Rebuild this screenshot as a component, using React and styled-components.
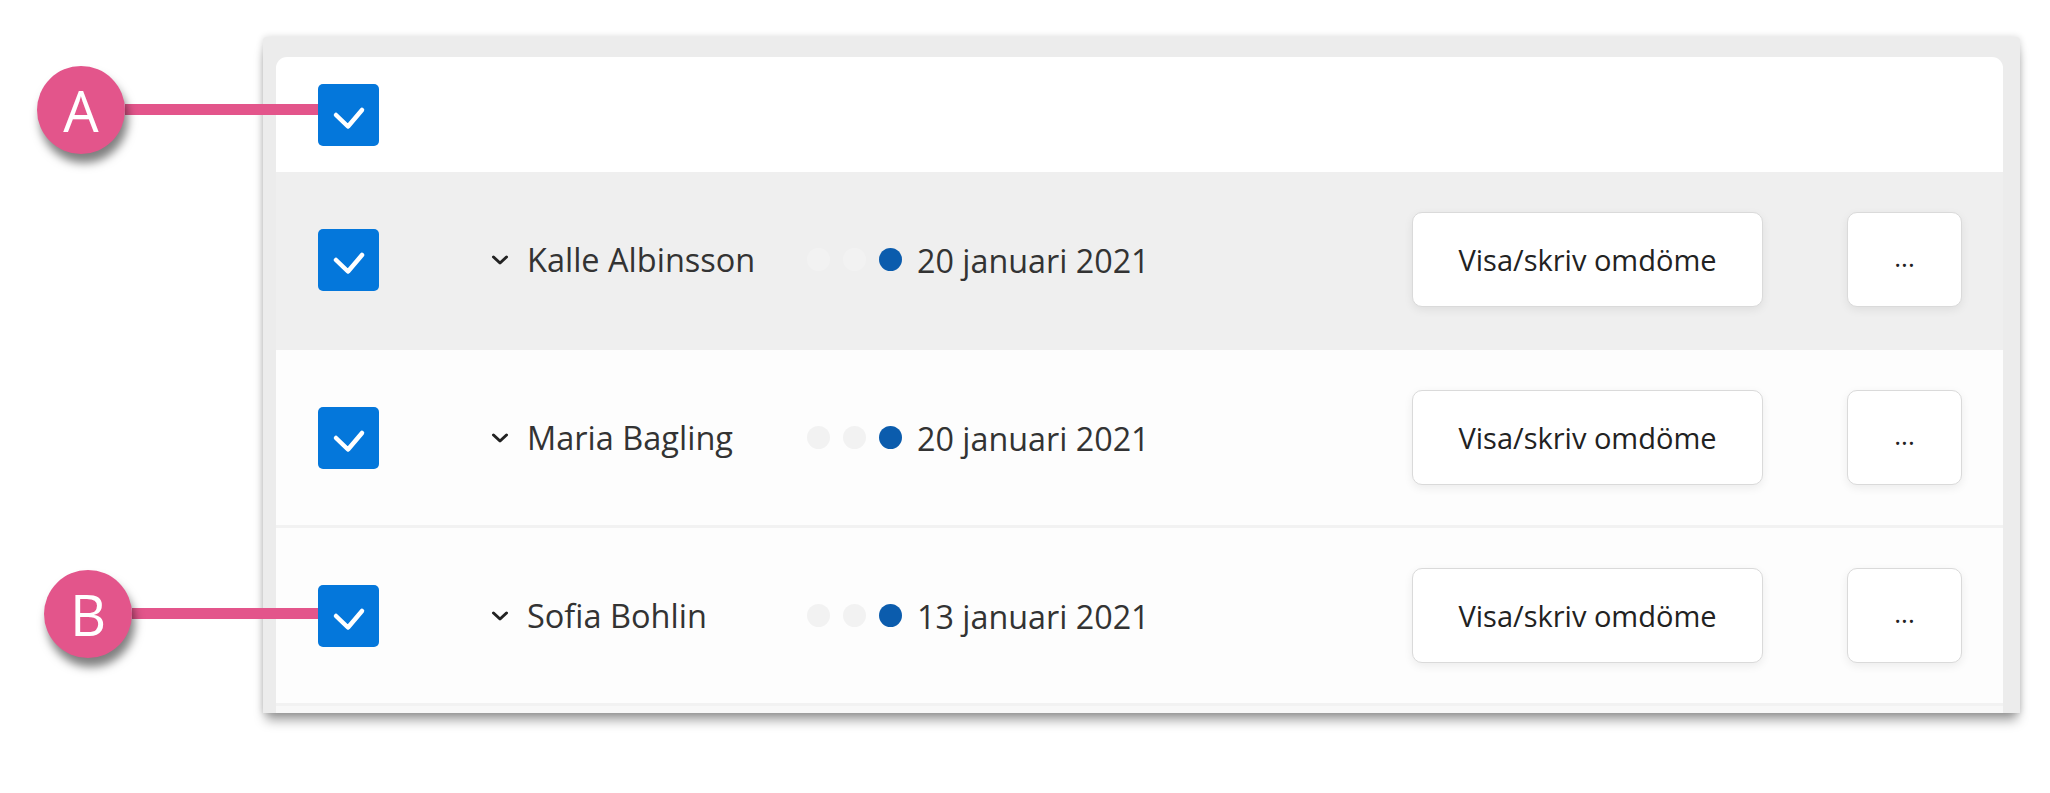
import React from 'react';
import styled, { createGlobalStyle } from 'styled-components';

const GlobalStyle = createGlobalStyle`
  * { box-sizing: border-box; }
  body {
    margin: 0;
    background: #ffffff;
    font-family: "Open Sans", "Noto Sans", sans-serif;
  }
`;

const students = [
  { name: 'Kalle Albinsson', date: '20 januari 2021', active: true },
  { name: 'Maria Bagling', date: '20 januari 2021' },
  { name: 'Sofia Bohlin', date: '13 januari 2021', callout: 'B' },
];

const Check = ({ callout }) => (
  <CheckCell>
    <CheckBox viewBox="0 0 61 62">
      <rect width="61" height="62" rx="5" fill="#0477db" />
      <polyline
        points="18,31 30,42.5 44,26"
        fill="none"
        stroke="#fff"
        strokeWidth="4.5"
        strokeLinecap="round"
        strokeLinejoin="round"
      />
    </CheckBox>
    {callout && (
      <Callout $top={callout === 'A' ? -18 : -15}>
        <Badge>{callout}</Badge>
        <Line $width={callout === 'A' ? 193 : 186} />
      </Callout>
    )}
  </CheckCell>
);

const Chevron = () => (
  <svg width="18" height="10" viewBox="0 0 18 10">
    <polyline
      points="2.5,2 9,8 15.5,2"
      fill="none"
      stroke="#222"
      strokeWidth="3"
      strokeLinecap="round"
      strokeLinejoin="round"
    />
  </svg>
);

export default function App() {
  return (
    <Page>
      <GlobalStyle />
      <Frame>
        <Inner>
          <Header>
            <Check callout="A" />
          </Header>
          {students.map((s) => (
            <Row key={s.name} $active={s.active}>
              <Check callout={s.callout} />
              <NameCell>
                <Chevron />
                <Name>{s.name}</Name>
              </NameCell>
              <Status>
                <Dot />
                <Dot />
                <Dot $filled />
                <DateText>{s.date}</DateText>
              </Status>
              <ActionButton>Visa/skriv omdöme</ActionButton>
              <MoreButton>...</MoreButton>
            </Row>
          ))}
          <NextRow />
        </Inner>
      </Frame>
    </Page>
  );
}

// STYLES --------------------------------

const Page = styled.div`
  width: 2050px;
  height: 793px;
  padding: 37px 0 0 263px;
  overflow: hidden;
`;

const Frame = styled.div`
  width: 1757px;
  background: #ececec;
  padding: 20px 17px 0 13px;
  border-radius: 4px 4px 0 0;
  box-shadow: 0 0 7px rgba(0, 0, 0, 0.16), 0 10px 12px -3px rgba(0, 0, 0, 0.38);
`;

const Inner = styled.div`
  background: #ffffff;
  border-radius: 11px 11px 0 0;
`;

const Header = styled.div`
  height: 115px;
  display: flex;
  align-items: center;
  padding-left: 42px;
`;

const Row = styled.div`
  height: 178px;
  display: flex;
  align-items: center;
  padding: 0 41px 0 42px;
  background: ${(p) => (p.$active ? '#efefef' : '#fdfdfd')};
  border-bottom: 3px solid ${(p) => (p.$active ? '#efefef' : '#f2f2f2')};
`;

const NextRow = styled.div`
  height: 7px;
  background: #f8f8f8;
`;

const CheckCell = styled.div`
  position: relative;
  width: 61px;
  height: 62px;
  flex-shrink: 0;
  margin-right: 112px;
`;

const CheckBox = styled.svg`
  display: block;
  width: 61px;
  height: 62px;
`;

const Callout = styled.div`
  position: absolute;
  right: 100%;
  top: ${(p) => p.$top}px;
  display: flex;
  align-items: center;
`;

const Badge = styled.div`
  position: relative;
  z-index: 1;
  width: 88px;
  height: 88px;
  border-radius: 50%;
  background: #e3558b;
  color: #fff;
  display: flex;
  align-items: center;
  justify-content: center;
  font-size: 56px;
  line-height: 1;
  box-shadow: 3px 9px 10px rgba(0, 0, 0, 0.5);
`;

const Line = styled.div`
  width: ${(p) => p.$width}px;
  height: 11px;
  background: #e3558b;
`;

const NameCell = styled.div`
  width: 316px;
  display: flex;
  align-items: center;
  gap: 18px;
`;

const Name = styled.span`
  font-size: 32.5px;
  color: #333;
  white-space: nowrap;
`;

const Status = styled.div`
  flex: 1;
  display: flex;
  align-items: center;
  gap: 13px;
`;

const Dot = styled.span`
  width: 23px;
  height: 23px;
  border-radius: 50%;
  background: ${(p) => (p.$filled ? '#0b5cad' : '#f2f2f2')};
`;

const DateText = styled.span`
  margin-left: 2px;
  font-size: 32.3px;
  color: #333;
  white-space: nowrap;
`;

const ButtonBase = styled.button`
  height: 95px;
  background: #fff;
  border: 1.5px solid #dadada;
  border-radius: 10px;
  box-shadow: 0 3px 10px rgba(0, 0, 0, 0.07);
  font-family: "Open Sans", "Noto Sans", sans-serif;
  font-size: 29px;
  color: #222;
  padding: 0;
`;

const ActionButton = styled(ButtonBase)`
  width: 351px;
`;

const MoreButton = styled(ButtonBase)`
  width: 115px;
  margin-left: 84px;
  font-size: 26px;
  padding-bottom: 6px;
`;
